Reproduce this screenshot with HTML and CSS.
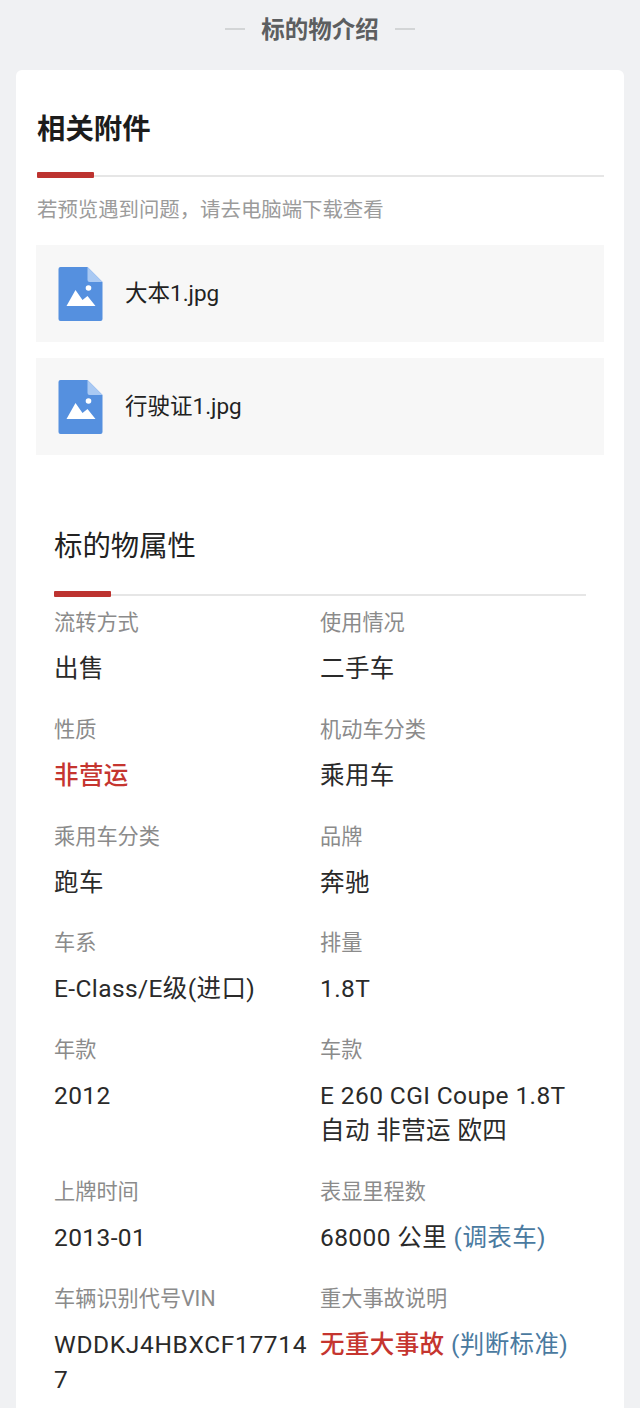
FILE: index.html
```html
<!DOCTYPE html>
<html lang="zh-CN">
<head>
    <meta charset="UTF-8">
    <meta name="viewport" content="width=device-width, initial-scale=1.0">
    <title>标的物介绍</title>
    <link rel="stylesheet" href="styles.css">
</head>
<body>
    <div class="page-title">
        <span class="dash"></span>
        <span class="page-title-text">标的物介绍</span>
        <span class="dash"></span>
    </div>

    <div class="card">
        <h2 class="card-title">相关附件</h2>
        <div class="divider"><span class="divider-mark"></span><span class="divider-line"></span></div>
        <p class="note">若预览遇到问题&#xFF0C;请去电脑端下载查看</p>

        <div class="file-row">
            <svg class="file-icon" viewBox="0 0 44 54">
                <path fill="#5590df" d="M2 0H29L44 15V52a2 2 0 0 1-2 2H2a2 2 0 0 1-2-2V2a2 2 0 0 1 2-2Z"/>
                <path fill="#a9c9f3" d="M29 0L44 15H31a2 2 0 0 1-2-2Z"/>
                <circle fill="#fff" cx="30" cy="21" r="2.8"/>
                <path fill="#fff" d="M8 39L17 23L24 33L29 29L37 39Z"/>
            </svg>
            <span class="file-name">大本1.jpg</span>
        </div>
        <div class="file-row">
            <svg class="file-icon" viewBox="0 0 44 54">
                <path fill="#5590df" d="M2 0H29L44 15V52a2 2 0 0 1-2 2H2a2 2 0 0 1-2-2V2a2 2 0 0 1 2-2Z"/>
                <path fill="#a9c9f3" d="M29 0L44 15H31a2 2 0 0 1-2-2Z"/>
                <circle fill="#fff" cx="30" cy="21" r="2.8"/>
                <path fill="#fff" d="M8 39L17 23L24 33L29 29L37 39Z"/>
            </svg>
            <span class="file-name">行驶证1.jpg</span>
        </div>

        <div class="props">
            <h3 class="props-title">标的物属性</h3>
            <div class="divider divider-props"><span class="divider-mark"></span><span class="divider-line"></span></div>

            <div class="prop-grid">
                <div class="prop"><div class="prop-label">流转方式</div><div class="prop-value">出售</div></div>
                <div class="prop"><div class="prop-label">使用情况</div><div class="prop-value">二手车</div></div>
                <div class="prop"><div class="prop-label">性质</div><div class="prop-value red">非营运</div></div>
                <div class="prop"><div class="prop-label">机动车分类</div><div class="prop-value">乘用车</div></div>
                <div class="prop"><div class="prop-label">乘用车分类</div><div class="prop-value">跑车</div></div>
                <div class="prop"><div class="prop-label">品牌</div><div class="prop-value">奔驰</div></div>
                <div class="prop"><div class="prop-label">车系</div><div class="prop-value">E-Class/E级(进口)</div></div>
                <div class="prop"><div class="prop-label">排量</div><div class="prop-value">1.8T</div></div>
                <div class="prop"><div class="prop-label">年款</div><div class="prop-value">2012</div></div>
                <div class="prop"><div class="prop-label">车款</div><div class="prop-value">E 260 CGI Coupe 1.8T 自动 非营运 欧四</div></div>
                <div class="prop"><div class="prop-label">上牌时间</div><div class="prop-value">2013-01</div></div>
                <div class="prop"><div class="prop-label">表显里程数</div><div class="prop-value">68000 公里 <span class="blue">(调表车)</span></div></div>
                <div class="prop"><div class="prop-label">车辆识别代号VIN</div><div class="prop-value vin">WDDKJ4HBXCF177147</div></div>
                <div class="prop"><div class="prop-label">重大事故说明</div><div class="prop-value"><span class="red">无重大事故</span> <span class="blue">(判断标准)</span></div></div>
            </div>
        </div>
    </div>
</body>
</html>
```

FILE: styles.css
```css
body {
    margin: 0;
    height: 1408px;
    overflow: hidden;
    background: #f0f1f3;
    font-family: Roboto, "Noto Sans CJK SC", sans-serif;
    color: #2a2a2a;
}

.page-title {
    display: flex;
    justify-content: center;
    align-items: center;
    gap: 16px;
    height: 58px;
    margin-bottom: 12px;
    font-size: 23.5px;
    font-weight: 700;
    color: #5c5e60;
}

.page-title-text {
    padding-bottom: 3px;
}

.dash {
    width: 20px;
    height: 2px;
    background: #d3d5d6;
}

.card {
    margin: 0 16px;
    padding: 40px 20px 0;
    background: #fff;
    border-radius: 6px 6px 0 0;
}

.card-title {
    margin: 0 0 22px 1px;
    font-size: 28.4px;
    line-height: 40px;
    font-weight: 700;
    color: #1c1c1c;
}

.divider {
    display: flex;
    align-items: flex-end;
    height: 6px;
    margin-left: 1px;
}

.divider-mark {
    width: 57px;
    height: 6px;
    border-radius: 1px;
    background: #bd3330;
}

.divider-line {
    flex: 1;
    height: 2px;
    margin-bottom: 1px;
    background: #e6e6e6;
}

.note {
    margin: 17px 0 20px 1px;
    font-size: 20.4px;
    line-height: 30px;
    color: #9b9b9b;
}

.file-row {
    display: flex;
    align-items: center;
    gap: 22px;
    height: 97px;
    margin-bottom: 16px;
    padding-left: 22px;
    background: #f7f7f7;
    color: #222;
}

.file-name {
    padding-bottom: 5px;
    font-size: 22.5px;
}

.file-icon {
    width: 45px;
    height: 54px;
}

.props {
    padding: 56px 18px 0;
}

.props-title {
    margin: 0 0 24px;
    font-size: 28.4px;
    line-height: 40px;
    font-weight: 400;
    color: #222;
}

.divider-props {
    margin-left: 0;
}

.prop-grid {
    display: grid;
    grid-template-columns: 266px 1fr;
    padding-top: 1px;
}

.prop {
    padding-right: 12px;
    padding-bottom: 18.8px;
}

.prop-label {
    margin-top: 9px;
    font-size: 21.2px;
    line-height: 32px;
    color: #8b8b8b;
}

.prop-value {
    margin-top: 12px;
    font-size: 24.5px;
    line-height: 35px;
    letter-spacing: 0.4px;
    word-break: break-all;
    color: #2a2a2a;
}

.vin {
    letter-spacing: 0.65px;
}

.red {
    color: #c5352f;
    font-weight: 500;
}

.blue {
    color: #4a7a9f;
}
```
